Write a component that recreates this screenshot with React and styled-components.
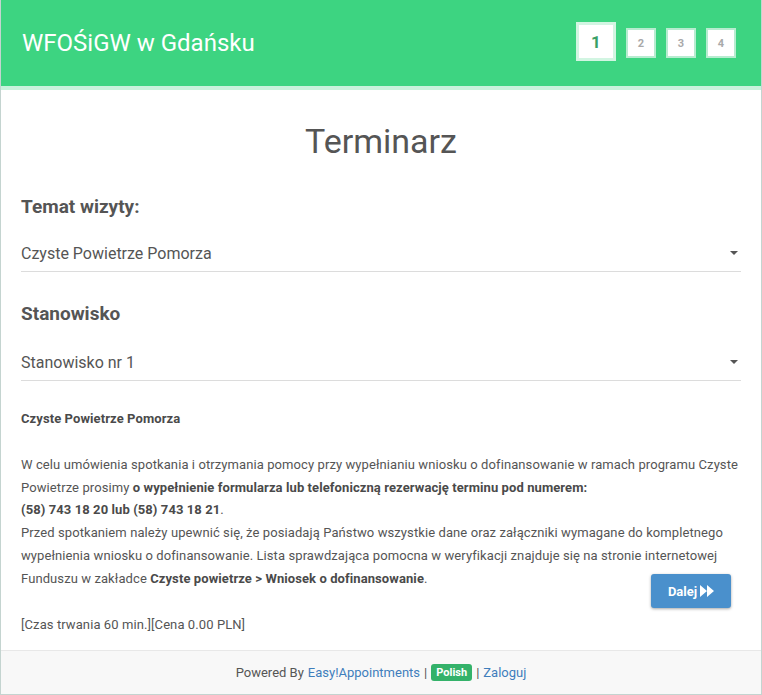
import React from "react";
import styled, { createGlobalStyle } from "styled-components";

const Global = createGlobalStyle`
  html, body { margin: 0; padding: 0; background: #fff; }
  body { font-family: Roboto, "Noto Sans", "Liberation Sans", sans-serif; color: #555; }
  * { box-sizing: border-box; }
`;

const Frame = styled.div`
  width: 762px;
  height: 695px;
  display: flex;
  flex-direction: column;
  border: 1px solid #c4d4d0;
  border-top: none;
  background: #fff;
`;

const Header = styled.header`
  height: 90px;
  flex: none;
  display: flex;
  align-items: center;
  justify-content: space-between;
  padding: 0 25px 4px 21px;
  background: #3dd481;
  border-bottom: 4px solid #c9f2dc;
`;

const Company = styled.div`
  color: #fff;
  font-size: 24px;
  line-height: 28px;
  margin-top: 3px;
`;

const Steps = styled.div`
  display: flex;
  align-items: center;
  gap: 10px;
  margin-top: 2px;
`;

const Step = styled.div`
  width: ${(p) => (p.$active ? 40 : 30)}px;
  height: ${(p) => (p.$active ? 39 : 30)}px;
  margin-top: ${(p) => (p.$active ? -1 : 2)}px;
  background: #fff;
  border: ${(p) => (p.$active ? 3 : 2)}px solid ${(p) => (p.$active ? "#d2f5e2" : "#b7ecd0")};
  display: flex;
  align-items: center;
  justify-content: center;
  font-weight: bold;
  font-size: ${(p) => (p.$active ? 17 : 11)}px;
  color: ${(p) => (p.$active ? "#3a9f66" : "#a9a9a9")};
`;

const Main = styled.main`
  flex: 1;
  padding: 0 20px;
`;

const Title = styled.h2`
  margin: 31px 0 0;
  text-align: center;
  font-size: 34px;
  line-height: 40px;
  font-weight: 400;
  color: #555;
`;

const Label = styled.h3`
  margin: ${(p) => p.$top}px 0 0;
  font-size: 19px;
  line-height: 24px;
  font-weight: bold;
  color: #555;
`;

const Select = styled.div`
  margin-top: ${(p) => p.$top}px;
  height: 37px;
  display: flex;
  align-items: center;
  justify-content: space-between;
  border-bottom: 1px solid #dcdcdc;
  font-size: 16px;
  color: #555;
  padding-right: 3px;
`;

const Caret = styled.span`
  width: 0;
  height: 0;
  border-left: 4px solid transparent;
  border-right: 4px solid transparent;
  border-top: 4px solid #555;
`;

const Info = styled.div`
  display: grid;
  margin-top: 27px;
  > * { grid-area: 1 / 1; }
`;

const Desc = styled.div`
  font-size: 13px;
  line-height: 22.8px;
  letter-spacing: 0.09px;
  color: #555;
  display: flex;
  flex-direction: column;
  gap: 23px;
  p { margin: 0; }
  b { color: #4a4a4a; }
`;

const ButtonSlot = styled.div`
  justify-self: end;
  align-self: end;
  margin: 0 10px 28px 0;
`;

const NextButton = styled.button`
  width: 80px;
  height: 34px;
  border: none;
  border-radius: 3px;
  background: #4a90cc;
  color: #fff;
  font-family: inherit;
  font-size: 13px;
  font-weight: bold;
  display: flex;
  align-items: center;
  justify-content: center;
  gap: 3px;
  box-shadow: 0 1px 3px rgba(0, 0, 0, 0.35);
  padding: 0;
`;

const Footer = styled.footer`
  flex: none;
  height: 44px;
  border-top: 1px solid #e8e8e8;
  background: #f8f8f8;
  display: flex;
  align-items: center;
  justify-content: center;
  gap: 4px;
  font-size: 13px;
  color: #555;
  padding-bottom: 1px;
`;

const Link = styled.a`
  color: #3f7ebc;
  text-decoration: none;
`;

const Badge = styled.span`
  background: #34b26a;
  color: #fff;
  font-size: 11px;
  font-weight: bold;
  border-radius: 3px;
  padding: 0 5px;
  height: 17px;
  line-height: 17px;
  display: inline-block;
`;

const Forward = () => (
  <svg width="14" height="12" viewBox="0 0 14 12" aria-hidden="true">
    <path d="M0 0 L7 6 L0 12 Z M7 0 L14 6 L7 12 Z" fill="#fff" />
  </svg>
);

export default function App() {
  return (
    <>
      <Global />
      <Frame>
        <Header>
          <Company>WFOŚiGW w Gdańsku</Company>
          <Steps>
            <Step $active>1</Step>
            <Step>2</Step>
            <Step>3</Step>
            <Step>4</Step>
          </Steps>
        </Header>
        <Main>
          <Title>Terminarz</Title>
          <Label $top={34}>Temat wizyty:</Label>
          <Select $top={16}>
            <span>Czyste Powietrze Pomorza</span>
            <Caret />
          </Select>
          <Label $top={30}>Stanowisko</Label>
          <Select $top={18}>
            <span>Stanowisko nr 1</span>
            <Caret />
          </Select>
          <Info>
            <Desc>
              <p>
                <b>Czyste Powietrze Pomorza</b>
              </p>
              <p>
                W celu umówienia spotkania i otrzymania pomocy przy wypełnianiu wniosku o dofinansowanie w ramach
                programu Czyste Powietrze prosimy{" "}
                <b>
                  o wypełnienie formularza lub telefoniczną rezerwację terminu pod numerem:
                  <br />
                  (58) 743 18 20 lub (58) 743 18 21
                </b>
                .
                <br />
                Przed spotkaniem należy upewnić się, że posiadają Państwo wszystkie dane oraz załączniki wymagane do
                kompletnego wypełnienia wniosku o dofinansowanie. Lista sprawdzająca pomocna w weryfikacji znajduje
                się na stronie internetowej Funduszu w zakładce <b>Czyste powietrze &gt; Wniosek o dofinansowanie</b>.
              </p>
              <p>[Czas trwania 60 min.][Cena 0.00 PLN]</p>
            </Desc>
            <ButtonSlot>
              <NextButton>
                Dalej <Forward />
              </NextButton>
            </ButtonSlot>
          </Info>
        </Main>
        <Footer>
          <span>Powered By</span>
          <Link href="#">Easy!Appointments</Link>
          <span>|</span>
          <Badge>Polish</Badge>
          <span>|</span>
          <Link href="#">Zaloguj</Link>
        </Footer>
      </Frame>
    </>
  );
}
